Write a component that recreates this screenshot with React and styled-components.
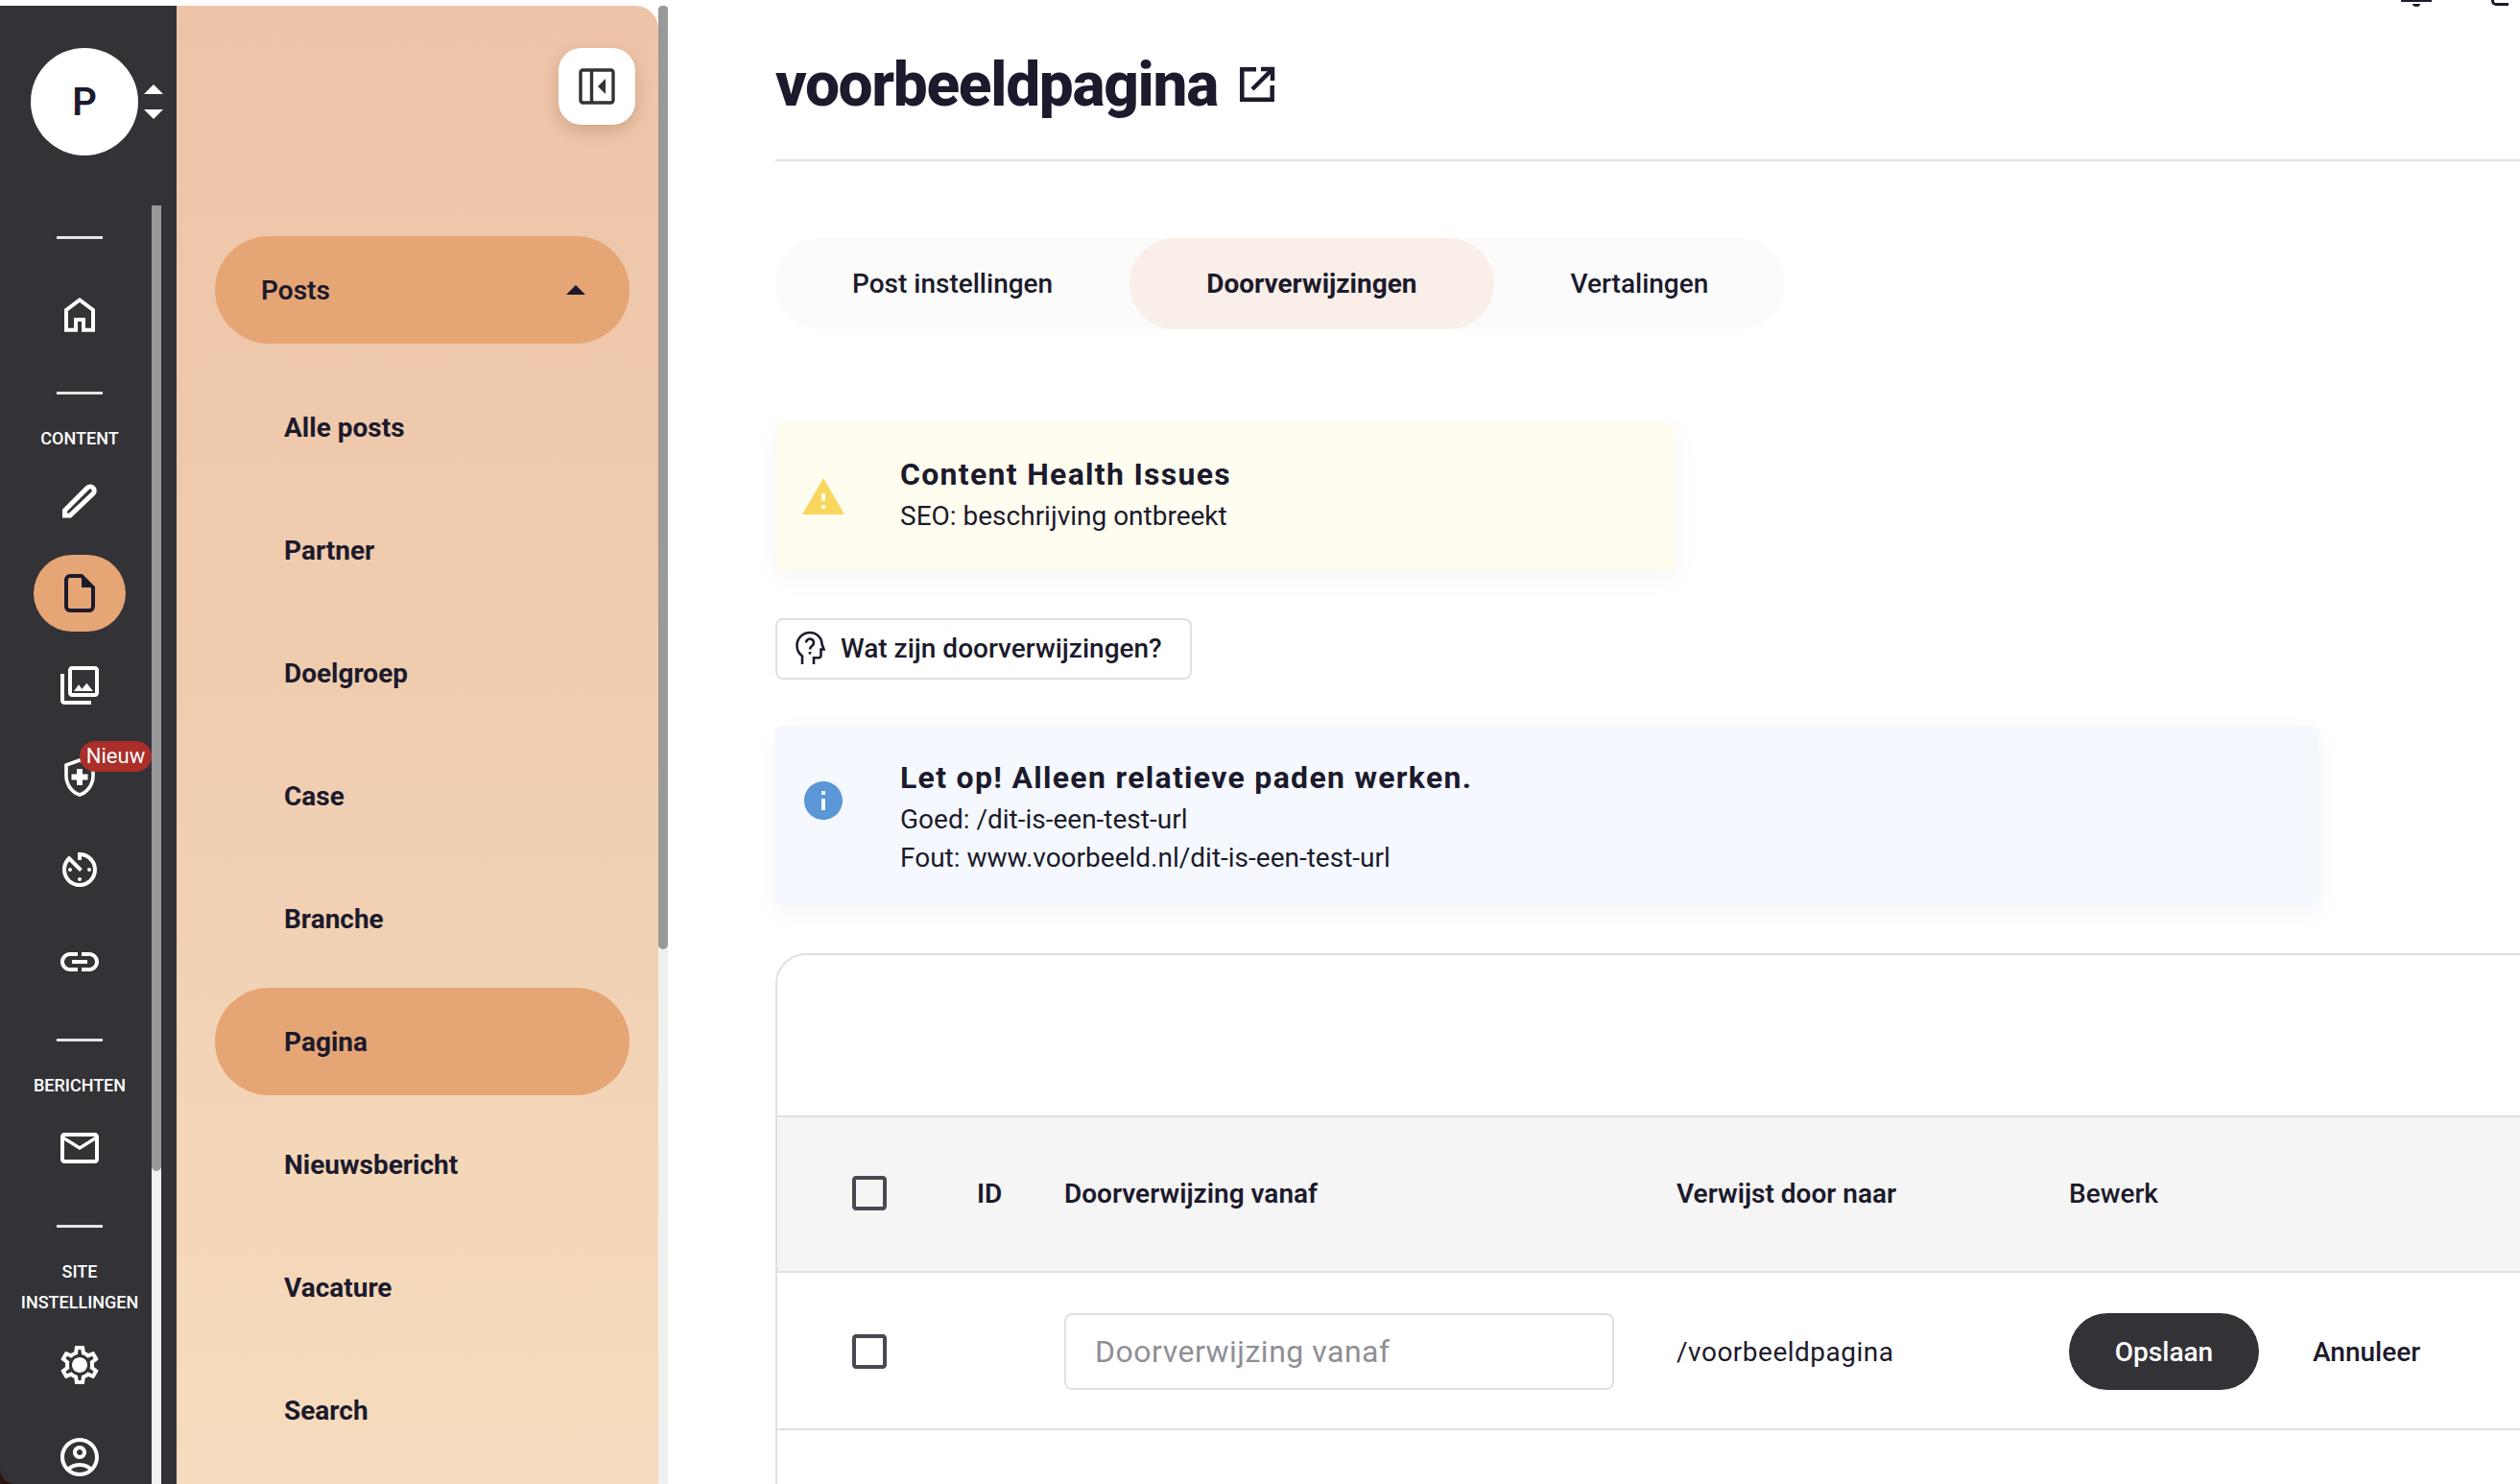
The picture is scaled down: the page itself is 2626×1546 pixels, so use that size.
import React from "react";
import styled, { createGlobalStyle } from "styled-components";
import {
  MdOutlinePhotoLibrary,
  MdOutlineAvTimer,
  MdOutlineLink,
  MdMailOutline,
  MdOutlineSettings,
  MdOutlineAccountCircle,
  MdWarning,
  MdInfo,
  MdCheckBoxOutlineBlank,
} from "react-icons/md";

const ink = "#1c1a2c";
const dark = "#333237";
const orange = "#e6a575";
const line = "#e0e0e0";

const GlobalStyle = createGlobalStyle`
  html, body {
    margin: 0;
    background: #fff;
    overflow: hidden;
    font-family: Roboto, "Liberation Sans", sans-serif;
    color: ${ink};
  }
  * { box-sizing: border-box; }
`;

const Page = styled.div`
  display: flex;
  width: 2626px;
  height: 1546px;
  overflow: hidden;
`;

/* left dark rail */
const RailFrame = styled.div`
  flex: 0 0 184px;
  margin-top: 6px;
  background: #2a1510;
`;

const Rail = styled.aside`
  display: flex;
  flex-direction: column;
  height: 100%;
  background: ${dark};
  border-bottom-left-radius: 16px;
  overflow: hidden;
`;

const RailTop = styled.div`
  flex: 0 0 208px;
  display: flex;
  align-items: flex-start;
  gap: 6px;
  padding: 44px 0 0 32px;
`;

const Avatar = styled.div`
  width: 112px;
  height: 112px;
  border-radius: 50%;
  background: #fff;
  display: flex;
  align-items: center;
  justify-content: center;
  font-size: 40px;
  font-weight: 600;
`;

const Sorter = styled.div`
  display: flex;
  flex-direction: column;
  gap: 16px;
  padding-top: 38px;
`;

const SortArrow = styled.span`
  width: 0;
  height: 0;
  border-left: 10px solid transparent;
  border-right: 10px solid transparent;
  ${(p) => (p.$down ? "border-top: 10px solid #fff;" : "border-bottom: 10px solid #fff;")}
`;

const RailBody = styled.div`
  flex: 1;
  min-height: 0;
  display: flex;
  padding-right: 16px;
`;

const RailNav = styled.nav`
  flex: 0 0 158px;
  padding: 32px 0 0 8px;
`;

const RailSection = styled.div`
  display: flex;
  flex-direction: column;
  margin-bottom: 40px;
`;

const RailLine = styled.div`
  width: 48px;
  height: 3px;
  margin: 0 auto 30px;
  background: #e4e4e4;
`;

const RailLabel = styled.div`
  color: #fff;
  font-size: 18px;
  font-weight: 500;
  line-height: 32px;
  text-align: center;
`;

const RailItems = styled.div`
  display: flex;
  flex-direction: column;
  gap: 16px;
  margin-top: 9px;
`;

const RailItem = styled.a`
  position: relative;
  display: flex;
  align-items: center;
  justify-content: center;
  width: 96px;
  height: 80px;
  margin: 0 auto;
  border-radius: 40px;
  font-size: 48px;
  color: ${(p) => (p.$active ? ink : "#fff")};
  background: ${(p) => (p.$active ? orange : "transparent")};
`;

const NewBadge = styled.span`
  position: absolute;
  left: 48px;
  top: 2px;
  width: 75px;
  height: 32px;
  border-radius: 16px;
  background: #ab2e28;
  color: #fff;
  font-size: 22px;
  line-height: 32px;
  text-align: center;
`;

const GearHub = styled.span`
  position: absolute;
  left: 42px;
  top: 34px;
  width: 12px;
  height: 12px;
  border-radius: 50%;
  background: #fff;
`;

const Scrollbar = styled.div`
  flex: 0 0 10px;
  margin-top: ${(p) => p.$top || 0}px;
  background: #f0f0f0;
`;

const ScrollThumb = styled.div`
  height: ${(p) => p.$height}px;
  background: #999;
  border-radius: ${(p) => (p.$roundTop ? "5px 5px 6px 6px" : "0 0 6px 6px")};
`;

/* sub navigation */
const Panel = styled.div`
  flex: 0 0 502px;
  margin-top: 6px;
  padding-top: 44px;
  background: linear-gradient(180deg, #eec4a8 0%, #f0ccaf 45%, #f6dcbe 100%);
  border-top-right-radius: 24px;
  overflow: hidden;
`;

const PanelHead = styled.div`
  display: flex;
  justify-content: flex-end;
  padding-right: 24px;
  margin-bottom: 116px;
`;

const CollapseButton = styled.button`
  width: 80px;
  height: 80px;
  padding: 0;
  border: 0;
  border-radius: 24px;
  background: #fff;
  box-shadow: 0 6px 16px rgba(90, 50, 20, 0.22);
  display: flex;
  align-items: center;
  justify-content: center;
`;

const Menu = styled.div`
  display: flex;
  flex-direction: column;
  gap: 16px;
  margin-left: 40px;
  width: 432px;
`;

const MenuHead = styled.div`
  display: flex;
  align-items: center;
  justify-content: space-between;
  height: 112px;
  padding: 0 46px 0 48px;
  margin-bottom: 15px;
  border-radius: 56px;
  background: ${orange};
  font-size: 28px;
  font-weight: 600;
`;

const Caret = styled.span`
  width: 0;
  height: 0;
  border-left: 10px solid transparent;
  border-right: 10px solid transparent;
  border-bottom: 10px solid ${ink};
`;

const MenuItem = styled.a`
  display: flex;
  align-items: center;
  height: 112px;
  padding-left: 72px;
  border-radius: 56px;
  font-size: 28px;
  font-weight: 700;
  background: ${(p) => (p.$active ? orange : "transparent")};
`;

/* main column */
const Main = styled.main`
  position: relative;
  flex: 1;
  min-width: 0;
  padding-left: 112px;
  overflow: hidden;
`;

const TopIcons = styled.div`
  position: absolute;
  top: 0;
  right: 12px;
  display: flex;
  gap: 62px;
`;

const TitleRow = styled.header`
  display: flex;
  align-items: center;
  gap: 17px;
  height: 168px;
  padding-top: 10px;
  border-bottom: 2px solid ${line};
`;

const Title = styled.h1`
  margin: 0;
  font-size: 64px;
  font-weight: 800;
  letter-spacing: -1.35px;
`;

const Tabs = styled.div`
  display: inline-flex;
  margin-top: 80px;
  height: 95px;
  border-radius: 48px;
  background: #fbfbfb;
`;

const Tab = styled.div`
  display: flex;
  align-items: center;
  padding: 0 80px;
  border-radius: 48px;
  font-size: 28px;
  font-weight: ${(p) => (p.$active ? 700 : 500)};
  background: ${(p) => (p.$active ? "#f9eee8" : "transparent")};
`;

const Alert = styled.section`
  display: flex;
  gap: 56px;
  width: ${(p) => p.$width}px;
  height: ${(p) => p.$height}px;
  margin-top: ${(p) => p.$top}px;
  padding: 34px 26px 0;
  border-radius: 8px;
  background: ${(p) => p.$bg};
  box-shadow: 0 8px 30px rgba(0, 0, 0, 0.04);
`;

const AlertIcon = styled.div`
  flex: 0 0 48px;
  padding-top: 20px;
  font-size: 48px;
  line-height: 0;
  color: ${(p) => p.$color};
`;

const AlertTitle = styled.div`
  font-size: 32px;
  font-weight: 700;
  line-height: 40px;
  letter-spacing: 1.3px;
  margin-bottom: 4px;
`;

const AlertLine = styled.div`
  font-size: 28px;
  line-height: 40px;
`;

const HelpButton = styled.button`
  display: flex;
  align-items: center;
  gap: 16px;
  width: 434px;
  height: 64px;
  margin-top: 49px;
  padding: 0 0 2px 18px;
  border: 2px solid ${line};
  border-radius: 8px;
  background: #fff;
  color: ${ink};
  font-family: inherit;
  font-size: 28px;
  font-weight: 500;
`;

const Card = styled.div`
  width: 1900px;
  height: 700px;
  margin-top: 50px;
  padding-top: 167px;
  border: 2px solid ${line};
  border-radius: 32px 0 0 0;
`;

const Row = styled.div`
  display: grid;
  grid-template-columns: 208px 91px 638px 409px 1fr;
  align-items: center;
  font-size: 28px;
  border-bottom: 2px solid ${line};
  ${(p) =>
    p.$head
      ? `height: 164px; padding-bottom: 2px; border-top: 2px solid ${line}; background: #f5f5f5; font-weight: 600;`
      : "height: 164px; padding-top: 2px;"}
`;

const BewerkHead = styled.div`
  font-weight: 500;
`;

const CheckCell = styled.div`
  padding-left: 72px;
  font-size: 48px;
  line-height: 0;
  color: #4a4952;
`;

const PathInput = styled.input`
  width: 573px;
  height: 80px;
  padding: 0 30px;
  border: 2px solid ${line};
  border-radius: 8px;
  font-family: inherit;
  font-size: 32px;
  letter-spacing: 0.5px;
  &::placeholder {
    color: #8f8e95;
    opacity: 1;
  }
`;

const PathText = styled.div`
  letter-spacing: 0.5px;
`;

const Actions = styled.div`
  display: flex;
  align-items: center;
  gap: 56px;
`;

const SaveButton = styled.button`
  width: 198px;
  height: 80px;
  border: 0;
  border-radius: 40px;
  background: ${dark};
  color: #fff;
  font-family: inherit;
  font-size: 28px;
  font-weight: 500;
`;

const CancelLink = styled.a`
  font-size: 28px;
  font-weight: 500;
`;

const HomeIcon = () => (
  <svg width="48" height="48" viewBox="0 0 48 48" fill="none" stroke="currentColor" strokeWidth="4">
    <path d="M20 39.7V29h8v10.7h10V19L24 8.5 10 19v20.7z" />
  </svg>
);

const PencilIcon = () => (
  <svg width="48" height="48" viewBox="0 0 48 48" fill="none" stroke="currentColor" strokeWidth="5" strokeLinejoin="miter">
    <path d="M8.5 39v-5.3L32 10.2a4.2 4.2 0 0 1 6 6L14 39z" />
  </svg>
);

const FileIcon = () => (
  <svg width="48" height="48" viewBox="0 0 48 48">
    <path
      d="M14 6h12l12 12v20a4 4 0 0 1-4 4H14a4 4 0 0 1-4-4V10a4 4 0 0 1 4-4z"
      fill="none"
      stroke="currentColor"
      strokeWidth="4"
    />
    <path d="M26 5l13 13H26z" fill="currentColor" />
  </svg>
);

const ShieldPlusIcon = () => (
  <svg width="48" height="48" viewBox="0 0 48 48">
    <path
      d="M24 6L10 11v11c0 9.500 6 17.500 14 20 8-2.500 14-10.500 14-20V11z"
      fill="none"
      stroke="currentColor"
      strokeWidth="3.6"
    />
    <path d="M21 15h6v5.500h5.500v6H27V32h-6v-5.500h-5.500v-6H21z" fill="currentColor" />
  </svg>
);

const ExternalIcon = () => (
  <svg width="48" height="48" viewBox="0 0 48 48" fill="none" stroke={ink} strokeWidth="4.500">
    <path d="M23 8.300H8.300v31.400h31.400V25" />
    <path d="M19 29L40 8" />
    <path d="M28 8h12v12" />
  </svg>
);

const HelpHeadIcon = () => (
  <svg width="32" height="36" viewBox="0 0 32 36" fill="none" stroke={ink} strokeWidth="2.600">
    <path d="M8 35v-8.500C4.500 24 2.500 20 2.500 15.500 2.500 8 8.500 2 16 2c7 0 12.500 5.500 12.500 12l2 5.500h-3V26a2.200 2.200 0 0 1-2.200 2.200H20V35" />
    <path d="M12 12.500a4 4 0 1 1 6.300 3.300c-1.400 1-2.300 1.800-2.300 3.700" />
    <path d="M16 22v2.600" />
  </svg>
);

const CollapseIcon = () => (
  <svg width="38" height="38" viewBox="0 0 38 38" fill="none" stroke={dark} strokeWidth="3.4">
    <rect x="2" y="2" width="34" height="34" rx="2.5" />
    <path d="M13.5 2v34" />
    <path d="M28 11v16l-8-8z" fill={dark} stroke="none" />
  </svg>
);

const BellStub = () => (
  <svg width="32" height="8" viewBox="0 0 32 8" fill={ink}>
    <rect width="32" height="2" />
    <path d="M12 4h8a4 3 0 0 1-8 0z" />
  </svg>
);

const CornerStub = () => (
  <svg width="18" height="6" viewBox="0 0 18 6" fill="none" stroke={ink} strokeWidth="3">
    <path d="M1.500 0v1a3.500 3.500 0 0 0 3.500 3.500h13" />
  </svg>
);

const railSections = [
  { items: [{ icon: <HomeIcon /> }] },
  {
    label: ["CONTENT"],
    items: [
      { icon: <PencilIcon /> },
      { icon: <FileIcon />, active: true },
      { icon: <MdOutlinePhotoLibrary /> },
      { icon: <ShieldPlusIcon />, badge: "Nieuw" },
      { icon: <MdOutlineAvTimer /> },
      { icon: <MdOutlineLink /> },
    ],
  },
  { label: ["BERICHTEN"], items: [{ icon: <MdMailOutline /> }] },
  {
    label: ["SITE", "INSTELLINGEN"],
    items: [{ icon: <MdOutlineSettings />, hub: true }, { icon: <MdOutlineAccountCircle /> }],
  },
];

const menuItems = [
  "Alle posts",
  "Partner",
  "Doelgroep",
  "Case",
  "Branche",
  "Pagina",
  "Nieuwsbericht",
  "Vacature",
  "Search",
];

const App = () => {
  return (
    <Page>
      <GlobalStyle />
      <RailFrame>
        <Rail>
          <RailTop>
            <Avatar>P</Avatar>
            <Sorter>
              <SortArrow />
              <SortArrow $down />
            </Sorter>
          </RailTop>
          <RailBody>
            <RailNav>
              {railSections.map((section, i) => (
                <RailSection key={i}>
                  <RailLine />
                  {section.label &&
                    section.label.map((text) => <RailLabel key={text}>{text}</RailLabel>)}
                  <RailItems>
                    {section.items.map((item, j) => (
                      <RailItem key={j} $active={item.active}>
                        {item.icon}
                        {item.hub && <GearHub />}
                        {item.badge && <NewBadge>{item.badge}</NewBadge>}
                      </RailItem>
                    ))}
                  </RailItems>
                </RailSection>
              ))}
            </RailNav>
            <Scrollbar>
              <ScrollThumb $height={1006} />
            </Scrollbar>
          </RailBody>
        </Rail>
      </RailFrame>

      <Panel>
        <PanelHead>
          <CollapseButton>
            <CollapseIcon />
          </CollapseButton>
        </PanelHead>
        <Menu>
          <MenuHead>
            Posts
            <Caret />
          </MenuHead>
          {menuItems.map((name) => (
            <MenuItem key={name} $active={name === "Pagina"}>
              {name}
            </MenuItem>
          ))}
        </Menu>
      </Panel>
      <Scrollbar $top={6}>
        <ScrollThumb $height={983} $roundTop />
      </Scrollbar>

      <Main>
        <TopIcons>
          <BellStub />
          <CornerStub />
        </TopIcons>
        <TitleRow>
          <Title>voorbeeldpagina</Title>
          <ExternalIcon />
        </TitleRow>

        <Tabs>
          <Tab>Post instellingen</Tab>
          <Tab $active>Doorverwijzingen</Tab>
          <Tab>Vertalingen</Tab>
        </Tabs>

        <Alert $width={938} $height={155} $top={97} $bg="#fffdf0">
          <AlertIcon $color="#f9d75f">
            <MdWarning />
          </AlertIcon>
          <div>
            <AlertTitle>Content Health Issues</AlertTitle>
            <AlertLine>SEO: beschrijving ontbreekt</AlertLine>
          </div>
        </Alert>

        <HelpButton>
          <HelpHeadIcon />
          Wat zijn doorverwijzingen?
        </HelpButton>

        <Alert $width={1609} $height={187} $top={48} $bg="#f5f9ff">
          <AlertIcon $color="#5b96d6">
            <MdInfo />
          </AlertIcon>
          <div>
            <AlertTitle>Let op! Alleen relatieve paden werken.</AlertTitle>
            <AlertLine>Goed: /dit-is-een-test-url</AlertLine>
            <AlertLine>Fout: www.voorbeeld.nl/dit-is-een-test-url</AlertLine>
          </div>
        </Alert>

        <Card>
          <Row $head>
            <CheckCell>
              <MdCheckBoxOutlineBlank />
            </CheckCell>
            <div>ID</div>
            <div>Doorverwijzing vanaf</div>
            <div>Verwijst door naar</div>
            <BewerkHead>Bewerk</BewerkHead>
          </Row>
          <Row>
            <CheckCell>
              <MdCheckBoxOutlineBlank />
            </CheckCell>
            <div />
            <div>
              <PathInput placeholder="Doorverwijzing vanaf" />
            </div>
            <PathText>/voorbeeldpagina</PathText>
            <Actions>
              <SaveButton>Opslaan</SaveButton>
              <CancelLink>Annuleer</CancelLink>
            </Actions>
          </Row>
        </Card>
      </Main>
    </Page>
  );
};

export default App;
